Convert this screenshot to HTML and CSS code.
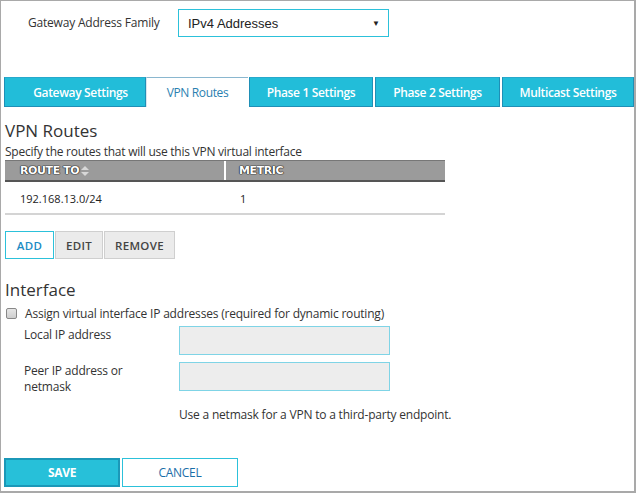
FILE: index.html
```html
<!DOCTYPE html>
<html>
<head>
<meta charset="utf-8">
<link rel="stylesheet" href="styles.css">
</head>
<body>
<div class="frame">
  <div class="family-row">
    <label class="family-label">Gateway Address Family</label>
    <div class="select">
      <span>IPv4 Addresses</span>
      <span class="caret">&#9660;</span>
    </div>
  </div>

  <div class="tabs">
    <div class="tab t1">Gateway Settings</div>
    <div class="tab active t2">VPN Routes</div>
    <div class="tab t3">Phase 1 Settings</div>
    <div class="tab t4">Phase 2 Settings</div>
    <div class="tab t5">Multicast Settings</div>
  </div>

  <div class="section">
    <h2 class="heading">VPN Routes</h2>
    <p class="desc">Specify the routes that will use this VPN virtual interface</p>
    <div class="table">
      <div class="thead">
        <div class="th c1">ROUTE TO<svg class="sort" width="8" height="10" viewBox="0 0 8 10"><path d="M4 0 L8 4 H0 Z M0 6 H8 L4 10 Z" fill="#d8d8d8"/></svg></div>
        <div class="th c2">METRIC</div>
      </div>
      <div class="trow">
        <div class="td c1">192.168.13.0/24</div>
        <div class="td c2">1</div>
      </div>
    </div>
    <div class="btn-group">
      <button class="btn add">ADD</button>
      <button class="btn grey edit">EDIT</button>
      <button class="btn grey remove">REMOVE</button>
    </div>
  </div>

  <div class="section iface">
    <h2 class="heading">Interface</h2>
    <div class="check-row">
      <span class="checkbox"></span>
      <span>Assign virtual interface IP addresses (required for dynamic routing)</span>
    </div>
    <div class="field">
      <label>Local IP address</label>
      <div class="input"></div>
    </div>
    <div class="field">
      <label>Peer IP address or<br>netmask</label>
      <div class="input"></div>
    </div>
    <p class="hint">Use a netmask for a VPN to a third-party endpoint.</p>
  </div>

  <div class="actions">
    <button class="act save">SAVE</button>
    <button class="act cancel">CANCEL</button>
  </div>
</div>
</body>
</html>
```
FILE: styles.css
```css
* { box-sizing: border-box; }
html, body { margin: 0; padding: 0; background: #fff; }
body { font-family: "Open Sans", "Noto Sans", sans-serif; color: #333; }

.frame {
  width: 636px;
  height: 493px;
  border: 1px solid #a9a9a9;
  border-right-width: 2px;
  border-bottom-width: 2px;
  padding: 8px 0 0 3px;
  display: flex;
  flex-direction: column;
}

.family-row {
  display: flex;
  align-items: center;
  height: 28px;
}
.family-label {
  width: 174px;
  padding-left: 24px;
  font-size: 12px;
  letter-spacing: -0.2px;
  color: #333;
  align-self: flex-start;
  padding-top: 5px;
}
.select {
  width: 211px;
  height: 28px;
  border: 1px solid #2cc1da;
  display: flex;
  align-items: center;
  justify-content: space-between;
  padding: 0 8px 0 9px;
  font-family: "Liberation Sans", Arial, sans-serif;
  font-size: 13px;
  color: #222;
}
.caret { font-size: 8px; color: #222; }

.tabs {
  display: flex;
  margin-top: 40px;
  height: 30px;
}
.tab {
  background: #22bdd9;
  color: #fff;
  font-weight: 600;
  font-size: 12px;
  letter-spacing: -0.35px;
  display: flex;
  align-items: center;
  justify-content: center;
  border: 1px solid #1f8fb6;
  border-top-color: #27a9cc;
  height: 30px;
}
.t1 { width: 142px; padding-left: 11px; }
.t2 { width: 102px; background: #fff; color: #2a7fb0; font-weight: 400; border: none; border-top: 1px solid #8ab7cf; border-left: 1px solid #d8e6ee; }
.t3 { width: 124px; margin-left: 1px; }
.t4 { width: 125px; margin-left: 2px; }
.t5 { width: 132px; margin-left: 2px; }

.section { padding-left: 1px; }
.heading {
  margin: 13px 0 0;
  font-size: 17px;
  font-weight: 400;
  color: #333;
  line-height: 22px;
}
.desc {
  margin: 2px 0 0;
  font-size: 12px;
  letter-spacing: -0.25px;
  line-height: 16px;
  color: #333;
}
.table { width: 440px; }
.thead {
  display: flex;
  height: 22px;
  background: #9b9b9b;
  border-top: 1px solid #777;
  border-bottom: 2px solid #555;
}
.th {
  color: #fff;
  font-family: "DejaVu Sans", Verdana, sans-serif;
  font-weight: 700;
  font-size: 11px;
  letter-spacing: -0.4px;
  display: flex;
  align-items: center;
  text-shadow: 0 0 1px #222, 0 0 1px #222, 0 0 1px #222, 0 0 1px #222;
}
.th.c1 { width: 221px; padding-left: 15px; border-right: 2px solid #fff; }
.th.c2 { padding-left: 13px; }
.sort { margin-left: 2px; }
.trow {
  display: flex;
  height: 33px;
  border-bottom: 2px solid #d4d4d4;
  align-items: center;
  padding-top: 1px;
}
.td {
  font-family: "Open Sans", sans-serif;
  font-size: 11px;
  color: #222;
}
.td.c1 { width: 221px; padding-left: 15px; }
.td.c2 { padding-left: 14px; }

.btn-group { display: flex; margin-top: 16px; }
.btn {
  height: 28px;
  font-family: "Open Sans", sans-serif;
  font-size: 11.5px;
  letter-spacing: 0.3px;
  padding: 0;
  background: #fff;
  border: 1px solid #2cc1da;
  color: #1c8bc4;
  font-weight: 600;
  margin: 0;
}
.btn.add { width: 49px; }
.btn.grey {
  background: #ebebeb;
  border: 1px solid #cfcfcf;
  color: #444;
  margin-left: 1px;
}
.btn.edit { width: 48px; }
.btn.remove { width: 71px; }

.iface .heading { margin-top: 20px; }
.check-row {
  display: flex;
  align-items: center;
  font-size: 12px;
  letter-spacing: -0.2px;
  color: #333;
  margin-left: -1px;
  margin-top: 4px;
  height: 16px;
}
.checkbox {
  width: 11px;
  height: 11px;
  border: 1px solid #888;
  border-radius: 2px;
  background: linear-gradient(#e6e6e6, #cfcfcf);
  margin: 0 8px 0 2px;
}
.field {
  display: flex;
  margin-top: 5px;
}
.field label {
  width: 174px;
  padding-left: 19px;
  font-size: 12px;
  letter-spacing: -0.2px;
  line-height: 16px;
  padding-top: 1px;
  color: #333;
}
.input {
  width: 211px;
  height: 29px;
  background: #ededed;
  border: 1px solid #7fd4e6;
}
.field + .field { margin-top: 7px; }
.hint {
  margin: 11px 0 0 174px;
  font-size: 12px;
  letter-spacing: -0.2px;
  color: #333;
}

.actions {
  display: flex;
  gap: 2px;
  margin-top: auto;
  margin-bottom: 4px;
}
.act {
  width: 116px;
  height: 29px;
  margin: 0;
  padding: 0;
  font-family: "Open Sans", sans-serif;
  font-size: 12px;
  letter-spacing: -0.3px;
}
.save {
  background: #27c0d9;
  border: 2px solid #1b98b8;
  color: #fff;
  font-weight: 700;
}
.cancel {
  background: #fff;
  border: 1px solid #2cc1da;
  color: #1a6ea8;
  font-weight: 400;
}
```
